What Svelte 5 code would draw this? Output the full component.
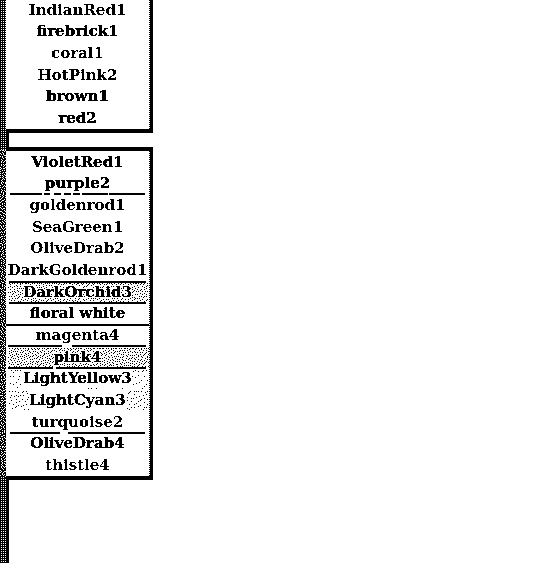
<script>
  const first = [
    { t: 'IndianRed1', light: 1 },
    { t: 'firebrick1' },
    { t: 'coral1', light: 1 },
    { t: 'HotPink2', light: 1 },
    { t: 'brown1' },
    { t: 'red2' }
  ];
  const second = [
    { t: 'VioletRed1' },
    { t: 'purple2' },
    { t: 'goldenrod1', light: 1, rule: [[10, 42], [44, 50], [54, 61], [64, 71], [73, 80], [82, 108], [109, 145]], h: 2, top: -1 },
    { t: 'SeaGreen1', light: 1 },
    { t: 'OliveDrab2', light: 1 },
    { t: 'DarkGoldenrod1', light: 1 },
    { t: 'DarkOrchid3', dots: 0.17, rule: [[9, 146]], h: 2, top: 0 },
    { t: 'floral white', rule: [[9, 146]], h: 2, top: -1 },
    { t: 'magenta4', light: 1, rule: [[6, 150]], h: 2, top: 0 },
    { t: 'pink4', light: 1, dots: 0.19, rule: [[8, 62], [72, 146]], h: 2, top: -1 },
    { t: 'LightYellow3', plate: 1, dots: 0.05, rule: [[8, 53], [56, 146]], h: 2, top: -1 },
    { t: 'LightCyan3', plate: 1, dots: 0.08 },
    { t: 'turquoise2', light: 1 },
    { t: 'OliveDrab4', rule: [[10, 60], [68, 145]], h: 2, top: -1 },
    { t: 'thistle4', light: 1 }
  ];

  // Stipple: error diffusion with a little noise, as a path of 1px squares.
  function stipple(w, h, density, seed) {
    let s = seed * 7919 + 17;
    let d = '';
    const err = Array.from({ length: h + 1 }, () => new Array(w + 2).fill(0));
    for (let x = 0; x < w + 2; x++) err[0][x] = ((x * 37) % 11) / 22;
    for (let y = 0; y < h; y++) {
      for (let x = 0; x < w; x++) {
        s = (s * 1103515245 + 12345) % 2147483648;
        const v = density + err[y][x + 1];
        const on = v + (s / 2147483648 - 0.5) * 0.5 > 0.5;
        const e = v - (on ? 1 : 0);
        if (x + 2 < w + 2) err[y][x + 2] += (e * 7) / 16;
        err[y + 1][x] += (e * 3) / 16;
        err[y + 1][x + 1] += (e * 5) / 16;
        if (x + 2 < w + 2) err[y + 1][x + 2] += e / 16;
        if (on) d += `M${x} ${y}h1v1h-1z`;
      }
    }
    return d;
  }
  const noise = stipple(6, 328, 0.3, 3);
</script>

{#snippet item(r, i)}
  <li>
    {#if r.dots}
      <svg class="fill" width="141" height="19" shape-rendering="crispEdges"><path d={stipple(141, 19, r.dots, i + 1)} /></svg>
    {/if}
    {#if r.rule}
      <div class="rule" style:top="{r.top}px">
        {#each r.rule as [a, b]}<i style:left="{a - 6}px" style:width="{b - a}px" style:height="{r.h}px"></i>{/each}
      </div>
    {/if}
    <div class="label" class:plate={r.plate}><span class:light={r.light} class:halo={r.dots}>{r.t}</span></div>
  </li>
{/snippet}

<svg class="defs" width="0" height="0">
  <filter id="ink" color-interpolation-filters="sRGB"><feComponentTransfer><feFuncA type="discrete" tableValues="0 0 1 1 1 1 1" /></feComponentTransfer></filter>
  <filter id="thin" color-interpolation-filters="sRGB"><feComponentTransfer><feFuncA type="discrete" tableValues="0 1" /></feComponentTransfer></filter>
  <filter id="halo" color-interpolation-filters="sRGB">
    <feComponentTransfer result="t"><feFuncA type="discrete" tableValues="0 0 1 1 1 1 1" /></feComponentTransfer>
    <feMorphology in="t" operator="dilate" radius="1" result="d" />
    <feFlood flood-color="#fff" />
    <feComposite in2="d" operator="in" result="w" />
    <feMerge><feMergeNode in="w" /><feMergeNode in="t" /></feMerge>
  </filter>
</svg>

<main>
  <div class="strip">
    <svg width="6" height="328" shape-rendering="crispEdges"><rect width="6" height="328" /><path fill="#fff" d={noise} /></svg>
  </div>
  <div class="column">
    <ul class="menu one">
      {#each first as r, i}{@render item(r, i)}{/each}
    </ul>
    <div class="gap"></div>
    <ul class="menu two">
      {#each second as r, i}{@render item(r, i)}{/each}
    </ul>
    <div class="rest"></div>
  </div>
</main>

<style>
  :global(body) { margin: 0; background: #fff; overflow: hidden; }
  .defs { position: absolute; }
  main { display: flex; width: 544px; height: 563px; background: #fff; overflow: hidden; }
  .strip {
    width: 6px;
    flex: none;
    padding-top: 150px;
    box-sizing: border-box;
    background:
      linear-gradient(#000 1px, transparent 1px) 0 0 / 2px 2px,
      linear-gradient(90deg, #000 1px, #fff 1px) 0 0 / 2px 2px;
  }
  .strip svg { display: block; }
  .column { display: flex; flex-direction: column; width: 147px; flex: none; }
  .menu {
    position: relative;
    list-style: none;
    margin: 0;
    padding: 0;
    box-sizing: border-box;
    border: solid #000;
    border-width: 0 3px 4px 0;
    flex: none;
  }
  .menu::after {
    content: '';
    position: absolute;
    right: 0;
    top: 0;
    bottom: 0;
    width: 1px;
    background: repeating-linear-gradient(#000 0 1px, #fff 1px 2px);
  }
  .one { height: 133px; }
  .one li:first-child { margin-top: -1px; }
  .two { height: 333px; border-top-width: 4px; }
  .gap { height: 14px; border-left: 3px solid #000; flex: none; }
  .rest { flex: 1; border-left: 3px solid #000; }
  li {
    position: relative;
    height: 21.67px;
    display: flex;
    justify-content: center;
    align-items: center;
    box-sizing: border-box;
    padding: 1px 1px 0 0;
    white-space: nowrap;
    font: bold 15px/21px 'DejaVu Serif', serif;
    color: #000;
  }
  .fill { position: absolute; left: 2px; top: 2px; }
  .rule { position: absolute; left: 0; }
  .rule i { position: absolute; top: 0; background: #000; }
  .label { position: relative; line-height: 19px; }
  .plate { background: #fff; }
  span { display: block; filter: url(#ink); }
  span.light { filter: url(#thin); }
  span.halo { filter: url(#halo); }
</style>
